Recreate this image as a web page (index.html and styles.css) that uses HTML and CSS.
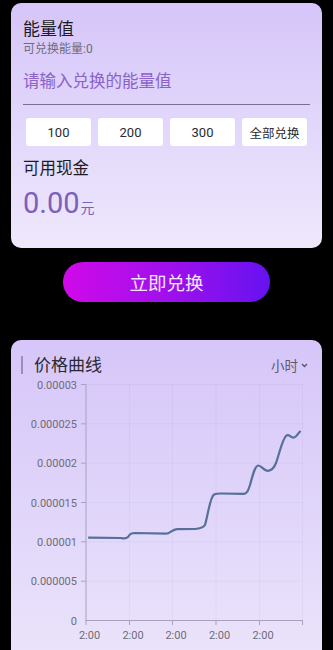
FILE: index.html
```html
<!DOCTYPE html>
<html lang="zh">
<head>
<meta charset="utf-8">
<link rel="stylesheet" href="styles.css">
</head>
<body>
<div class="card card-exchange">
  <div class="title">能量值</div>
  <div class="sub">可兑换能量:0</div>
  <div class="input">请输入兑换的能量值</div>
  <div class="quick">
    <div class="qbtn">100</div>
    <div class="qbtn">200</div>
    <div class="qbtn">300</div>
    <div class="qbtn">全部兑换</div>
  </div>
  <div class="cash-label">可用现金</div>
  <div class="cash"><span class="num">0.00</span><span class="unit">元</span></div>
</div>

<div class="submit">立即兑换</div>

<div class="card card-chart">
  <div class="chart-head">
    <div class="chart-title">价格曲线</div>
    <div class="period">小时<svg class="chev" width="7" height="5" viewBox="0 0 7 5"><path d="M1 1 L3.5 3.5 L6 1" fill="none" stroke="#55556a" stroke-width="1.3"/></svg></div>
  </div>
  <svg class="chart" width="311" height="274" viewBox="11 376 311 274">
    <g stroke="rgba(60,40,100,0.035)" stroke-width="1">
      <line x1="129.5" y1="384" x2="129.5" y2="620"/>
      <line x1="172.5" y1="384" x2="172.5" y2="620"/>
      <line x1="216" y1="384" x2="216" y2="620"/>
      <line x1="259.5" y1="384" x2="259.5" y2="620"/>
      <line x1="302.5" y1="384" x2="302.5" y2="620"/>
      <line x1="86" y1="384.5" x2="303" y2="384.5"/>
      <line x1="86" y1="423.8" x2="303" y2="423.8"/>
      <line x1="86" y1="463.2" x2="303" y2="463.2"/>
      <line x1="86" y1="502.5" x2="303" y2="502.5"/>
      <line x1="86" y1="541.8" x2="303" y2="541.8"/>
      <line x1="86" y1="581.2" x2="303" y2="581.2"/>
    </g>
    <g stroke="#aaa2bd" stroke-width="1">
      <line x1="86" y1="384" x2="86" y2="621"/>
      <line x1="86" y1="620.5" x2="303" y2="620.5"/>
      <line x1="81" y1="384.5" x2="86" y2="384.5"/>
      <line x1="81" y1="423.8" x2="86" y2="423.8"/>
      <line x1="81" y1="463.2" x2="86" y2="463.2"/>
      <line x1="81" y1="502.5" x2="86" y2="502.5"/>
      <line x1="81" y1="541.8" x2="86" y2="541.8"/>
      <line x1="81" y1="581.2" x2="86" y2="581.2"/>
      <line x1="86" y1="620" x2="86" y2="625"/>
      <line x1="129.5" y1="620" x2="129.5" y2="625"/>
      <line x1="172.5" y1="620" x2="172.5" y2="625"/>
      <line x1="216" y1="620" x2="216" y2="625"/>
      <line x1="259.5" y1="620" x2="259.5" y2="625"/>
      <line x1="302.5" y1="620" x2="302.5" y2="625"/>
    </g>
    <g class="ylab" text-anchor="end">
      <text x="77" y="388.5">0.00003</text>
      <text x="77" y="427.8">0.000025</text>
      <text x="77" y="467.2">0.00002</text>
      <text x="77" y="506.5">0.000015</text>
      <text x="77" y="545.8">0.00001</text>
      <text x="77" y="585.2">0.000005</text>
      <text x="77" y="624.5">0</text>
    </g>
    <g class="xlab" text-anchor="middle">
      <text x="89.5" y="639">2:00</text>
      <text x="133" y="639">2:00</text>
      <text x="176" y="639">2:00</text>
      <text x="219.5" y="639">2:00</text>
      <text x="263" y="639">2:00</text>
    </g>
    <path d="M89,537.7 L121,538 C124,538.5 126,539 128,537 C130,534 131,533 135,533 L166,533.7 C170,533.7 172,529.5 177,529.2 L195,529 C200,528.5 203,528 205,525 C208,515 210,497 214,494.5 C216,493.5 218,493.5 221,493.5 L244,493.8 C247,493.5 248,491 250,485 C253,474 255,466 258,465.5 C261,465 264,471 268,470.8 C272,470.5 274,468 276,463 C279,455 282,440 286,436 C289,433 291,438.5 294,437.5 C297,436.5 298,433 300,431.7" fill="none" stroke="#57709a" stroke-width="2.2" stroke-linecap="round" stroke-linejoin="round"/>
  </svg>
</div>
</body>
</html>
```

FILE: styles.css
```css
html, body {
  margin: 0;
  padding: 0;
  background: #000;
  height: 650px;
  overflow: hidden;
  font-family: Roboto, "Noto Sans CJK SC", sans-serif;
}

.card {
  width: 311px;
  margin-left: 11px;
  border-radius: 10px;
  box-sizing: border-box;
}

.card-exchange {
  margin-top: 3px;
  padding: 14px 12px 0 12px;
  height: 245px;
  background: linear-gradient(180deg, #d6c5f9 0%, #e3d9fb 55%, #eee8fc 100%);
}

.title {
  font-size: 17px;
  line-height: 24px;
  height: 24px;
  color: #1c1c24;
}

.sub {
  font-size: 12px;
  line-height: 16px;
  height: 16px;
  color: #6f6d7c;
}

.input {
  margin-top: 13px;
  height: 34px;
  font-size: 16.5px;
  line-height: 24px;
  color: #8a62c8;
  border-bottom: 1px solid #7c6c9a;
}

.quick {
  display: flex;
  gap: 7px;
  margin-top: 13px;
  margin-left: 3px;
}

.qbtn {
  width: 65px;
  height: 28px;
  background: #fff;
  border-radius: 3px;
  display: flex;
  align-items: center;
  justify-content: center;
  font-size: 13px;
  color: #2a2a30;
}

.qbtn:last-child {
  font-size: 12.5px;
}

.cash-label {
  margin-top: 11px;
  font-size: 16.5px;
  line-height: 24px;
  height: 24px;
  color: #1c1c24;
}

.cash {
  margin-top: 4px;
  height: 36px;
  display: flex;
  align-items: baseline;
  color: #7d5fbb;
}

.cash .num {
  font-size: 29px;
  line-height: 36px;
}

.cash .unit {
  font-size: 14px;
  line-height: 16px;
  margin-left: 1px;
}

.submit {
  width: 207px;
  height: 40px;
  margin: 14px auto 0 auto;
  border-radius: 20px;
  background: linear-gradient(90deg, #d00ae8 0%, #a010ec 50%, #6612f0 100%);
  color: #f4e6ff;
  font-size: 18.5px;
  display: flex;
  align-items: center;
  justify-content: center;
}

.card-chart {
  margin-top: 38px;
  height: 330px;
  padding: 14px 0 0 0;
  background: linear-gradient(180deg, #d6c6f9 0%, #e0d5fa 50%, #ece5fb 100%);
}

.chart-head {
  display: flex;
  align-items: center;
  height: 22px;
  padding-left: 10px;
  padding-right: 14px;
}

.chart-title {
  border-left: 2px solid #9d8db9;
  padding-left: 11px;
  height: 18px;
  line-height: 18px;
  font-size: 17px;
  color: #2a2a32;
  flex: 1;
}

.period {
  display: flex;
  align-items: center;
  font-size: 13.5px;
  color: #5e5c6c;
  gap: 3px;
}

.chev {
  display: block;
}

.chart {
  display: block;
}

.ylab text, .xlab text {
  font-family: Roboto, sans-serif;
  font-size: 11px;
  fill: #6e6c78;
}
```
